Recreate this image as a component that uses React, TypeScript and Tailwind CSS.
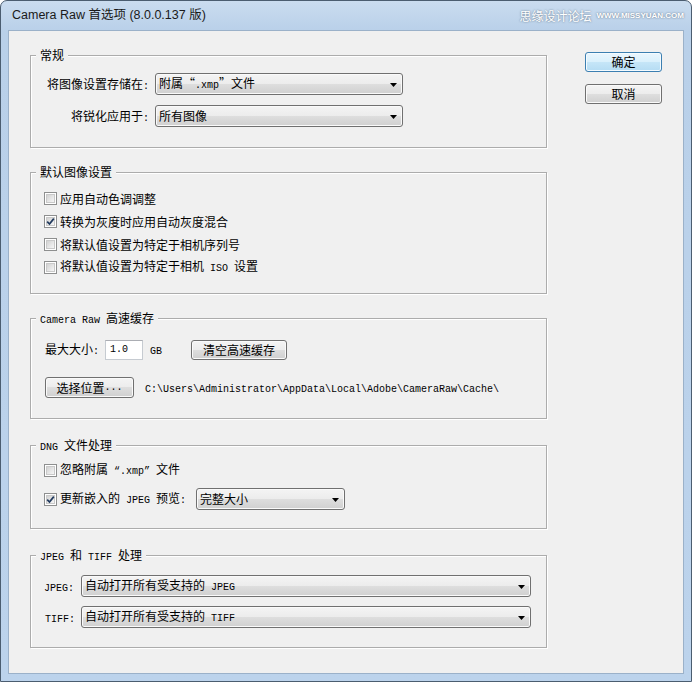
import React from 'react'

type Kids = { children?: React.ReactNode }

// latin runs inside SimSun-style labels are narrow monospace
const M = ({ children }: Kids) => <span className="font-['Liberation_Mono',monospace] text-[10px]">{children}</span>

const Group = ({ title, className = '', inner = '', children }: Kids & { title: React.ReactNode; className?: string; inner?: string }) => (
  <fieldset className={`border border-[#acacac] shadow-[inset_1px_1px_0_#fff,1px_1px_0_#fff] ${className}`}>
    <legend className="ml-[5px] flex h-4 items-baseline bg-[#f0f0f0] px-1 leading-4">{title}</legend>
    <div className={inner}>{children}</div>
  </fieldset>
)

const Select = ({ value, className = '' }: { value: React.ReactNode; className?: string }) => (
  <div
    className={`flex h-[22px] items-center justify-between rounded-[3px] border border-[#707070] bg-[linear-gradient(#f4f4f4,#ececec_50%,#dedede_50%,#d0d0d0)] pl-[3px] pr-[5px] shadow-[inset_0_0_0_1px_#fafafa] ${className}`}
  >
    <span className="leading-4">{value}</span>
    <svg width="7" height="4" viewBox="0 0 7 4" className="mt-[1px]">
      <path d="M0 0h7L3.5 4z" fill="#000" />
    </svg>
  </div>
)

const Btn = ({ children, className = '', primary = false }: Kids & { className?: string; primary?: boolean }) => (
  <button
    className={`flex items-center justify-center rounded-[3px] border leading-4 ${
      primary
        ? 'border-[#3c7fb1] bg-[linear-gradient(#eaf6fd,#d9f0fc_50%,#c6e6f8_50%,#b5dcf3)] shadow-[inset_0_0_0_1px_#f4fbff]'
        : 'border-[#707070] bg-[linear-gradient(#f4f4f4,#ececec_50%,#dedede_50%,#d0d0d0)] shadow-[inset_0_0_0_1px_#fafafa]'
    } ${className}`}
  >
    {children}
  </button>
)

const Check = ({ checked = false }: { checked?: boolean }) => (
  <span className="flex h-[13px] w-[13px] shrink-0 items-center justify-center border border-[#8e8f8f] bg-white">
    <span className="relative h-[9px] w-[9px] border border-[#c9c9c9] bg-[linear-gradient(135deg,#d2d2d2,#f6f6f6)]">
      {checked ? (
        <svg width="11" height="11" viewBox="0 0 11 11" className="absolute left-[-2px] top-[-2px]">
          <path d="M2.2 5.6 4.5 8 8.8 2.6" fill="none" stroke="#213a5e" strokeWidth="1.7" />
        </svg>
      ) : null}
    </span>
  </span>
)

const CheckRow = ({ checked, children }: Kids & { checked?: boolean }) => (
  <div className="flex h-[23px] items-center gap-[3px]">
    <Check checked={checked} />
    <span className="leading-4">{children}</span>
  </div>
)

const App = () => {
  return (
    <div className="h-[682px] w-[692px] font-['Noto_Sans_CJK_SC',sans-serif] text-[12px] text-black">
      <div className="flex h-full flex-col rounded-t-[7px] border border-[#4b5d70] bg-[linear-gradient(#cadcef,#b9d0e9_30px,#bcd3ec)] px-[7px] pb-[7px]">
        {/* title bar */}
        <div className="flex h-[29px] items-center justify-between pl-[4px]">
          <span className="font-['Liberation_Sans','Noto_Sans_CJK_SC',sans-serif] text-[12.5px] text-[#1a1a1a]">
            Camera Raw 首选项 (8.0.0.137 版)
          </span>
          <span className="flex items-center gap-[5px] text-white [text-shadow:0_0_2px_#55677a]">
            <span className="text-[12px]">思缘设计论坛</span>
            <span className="font-['Liberation_Sans',sans-serif] text-[8px] font-bold">WWW.MISSYUAN.COM</span>
          </span>
        </div>

        <div className="flex flex-1 border border-[#9bb1c9] bg-[#f0f0f0] pl-[21px] pt-[16px]">
          <div className="flex w-[517px] flex-col">
            <Group title="常规" inner="pb-[20px] pt-[10px]">
              <div className="flex items-center">
                <span className="w-[118px] text-right">
                  将图像设置存储在<M>:</M>
                </span>
                <Select
                  className="ml-[6px] w-[248px]"
                  value={
                    <>
                      附属“<M>.xmp</M>”文件
                    </>
                  }
                />
              </div>
              <div className="mt-[10px] flex items-center">
                <span className="w-[118px] text-right">
                  将锐化应用于<M>:</M>
                </span>
                <Select className="ml-[6px] w-[248px]" value="所有图像" />
              </div>
            </Group>

            <Group title="默认图像设置" className="mt-[16px]" inner="pb-[14px] pl-[13px] pt-[7px]">
              <CheckRow>应用自动色调调整</CheckRow>
              <CheckRow checked>转换为灰度时应用自动灰度混合</CheckRow>
              <CheckRow>将默认值设置为特定于相机序列号</CheckRow>
              <CheckRow>
                将默认值设置为特定于相机<M> ISO </M>设置
              </CheckRow>
            </Group>

            <Group
              title={
                <>
                  <M>Camera Raw</M>
                  <span className="ml-[6px]">高速缓存</span>
                </>
              }
              className="mt-[16px]"
              inner="pb-[20px] pl-[14px] pt-[13px]"
            >
              <div className="flex h-[21px] items-center">
                <span>
                  最大大小<M>:</M>
                </span>
                <div className="ml-[6px] flex h-[20px] w-[38px] items-center border border-[#c6cbd1] border-t-[#abadb3] bg-white pl-[4px]">
                  <M>1.0</M>
                </div>
                <span className="ml-[7px]">
                  <M>GB</M>
                </span>
                <Btn className="ml-[29px] h-[20px] w-[96px]">清空高速缓存</Btn>
              </div>
              <div className="mt-[17px] flex h-[21px] items-center">
                <Btn className="h-[21px] w-[89px]">
                  选择位置<M>...</M>
                </Btn>
                <span className="ml-[11px]">
                  <M>C:\Users\Administrator\AppData\Local\Adobe\CameraRaw\Cache\</M>
                </span>
              </div>
            </Group>

            <Group
              title={
                <>
                  <M>DNG</M>
                  <span className="ml-[6px]">文件处理</span>
                </>
              }
              className="mt-[18px]"
              inner="pb-[18px] pl-[13px] pt-[6px]"
            >
              <CheckRow>
                忽略附属<M> “.xmp” </M>文件
              </CheckRow>
              <div className="mt-[6px] flex items-center">
                <Check checked />
                <span className="ml-[3px] leading-4">
                  更新嵌入的<M> JPEG </M>预览<M>:</M>
                </span>
                <Select className="ml-[10px] w-[149px]" value="完整大小" />
              </div>
            </Group>

            <Group
              title={
                <>
                  <M>JPEG</M>
                  <span className="mx-[6px]">和</span>
                  <M>TIFF</M>
                  <span className="ml-[6px]">处理</span>
                </>
              }
              className="mt-[18px]"
              inner="pb-[19px] pl-[13px] pt-[12px]"
            >
              <div className="flex items-center">
                <span className="w-[30px]">
                  <M>JPEG:</M>
                </span>
                <Select
                  className="ml-[7px] w-[450px]"
                  value={
                    <>
                      自动打开所有受支持的<M> JPEG</M>
                    </>
                  }
                />
              </div>
              <div className="mt-[9px] flex items-center">
                <span className="w-[30px] pl-[1px]">
                  <M>TIFF:</M>
                </span>
                <Select
                  className="ml-[7px] w-[450px]"
                  value={
                    <>
                      自动打开所有受支持的<M> TIFF</M>
                    </>
                  }
                />
              </div>
            </Group>
          </div>

          <div className="ml-[38px] flex flex-col gap-[12px] pt-[5px]">
            <Btn primary className="h-[20px] w-[77px]">
              确定
            </Btn>
            <Btn className="h-[20px] w-[77px]">取消</Btn>
          </div>
        </div>
      </div>
    </div>
  )
}

export default App
